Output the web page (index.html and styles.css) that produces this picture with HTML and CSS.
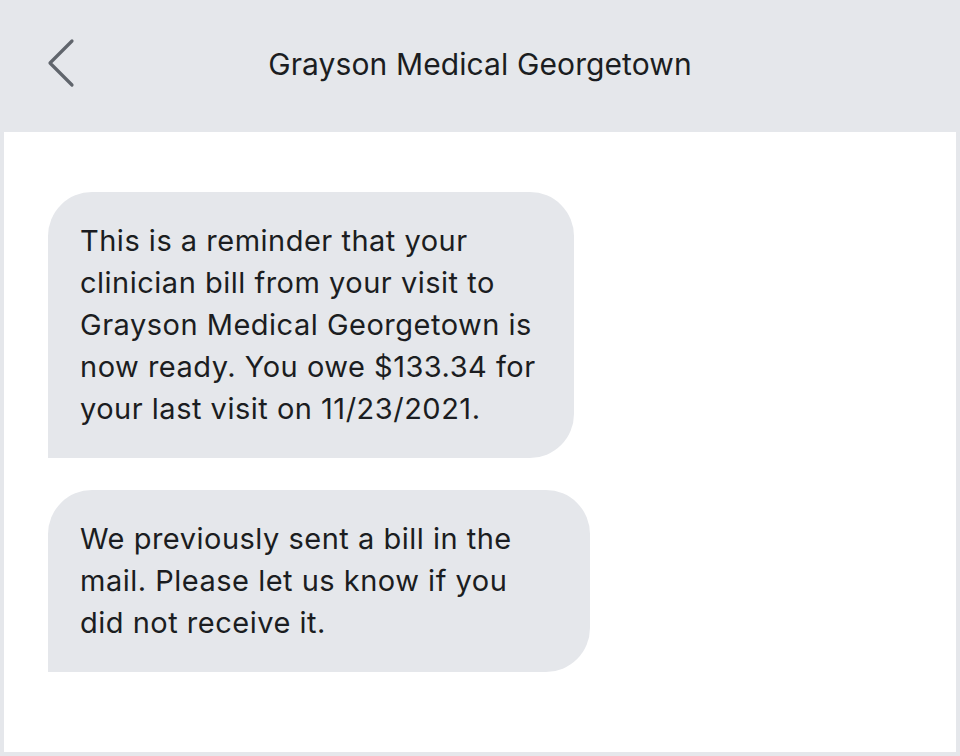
FILE: index.html
```html
<!DOCTYPE html>
<html lang="en">
<head>
<meta charset="utf-8">
<title>Grayson Medical Georgetown</title>
<link rel="stylesheet" href="styles.css">
</head>
<body>
<div class="screen">
  <header class="topbar">
    <button class="back" aria-label="Back">
      <svg width="30" height="50" viewBox="0 0 30 50" aria-hidden="true">
        <path d="M25 3 L3 25 L25 47" fill="none" stroke="#60656c" stroke-width="3.2" stroke-linecap="round" stroke-linejoin="round"/>
      </svg>
    </button>
    <h1 class="title">Grayson Medical Georgetown</h1>
  </header>
  <main class="thread">
    <div class="bubble bubble-one">This is a reminder that your<br>clinician bill from your visit to<br>Grayson Medical Georgetown is<br>now ready. You owe $133.34 for<br>your last visit on 11/23/2021.</div>
    <div class="bubble bubble-two">We previously sent a bill in the<br>mail. Please let us know if you<br>did not receive it.</div>
  </main>
</div>
</body>
</html>
```
FILE: styles.css
```css
html, body {
  margin: 0;
  padding: 0;
  background: #e5e7eb;
}
body {
  font-family: Inter, "Noto Sans", sans-serif;
  color: #1b1d21;
}
.screen {
  width: 960px;
  height: 756px;
  display: flex;
  flex-direction: column;
}
.topbar {
  height: 132px;
  flex: none;
  position: relative;
  display: flex;
  align-items: center;
  justify-content: center;
}
.back {
  position: absolute;
  left: 47px;
  top: 38px;
  padding: 0;
  border: 0;
  background: none;
  width: 30px;
  height: 50px;
}
.back svg { display: block; }
.title {
  margin: 0 0 4px 0;
  font-weight: 400;
  font-size: 30px;
  letter-spacing: 0.1px;
}
.thread {
  flex: 1;
  margin: 0 4px 4px 4px;
  background: #ffffff;
  padding: 60px 44px 0 44px;
  display: flex;
  flex-direction: column;
  align-items: flex-start;
  gap: 32px;
}
.bubble {
  background: #e5e7eb;
  border-radius: 44px 44px 44px 0;
  padding: 28px 32px;
  font-size: 29px;
  line-height: 42px;
  letter-spacing: 0.5px;
  box-sizing: border-box;
}
.bubble-one { width: 526px; }
.bubble-two { width: 542px; }
```
